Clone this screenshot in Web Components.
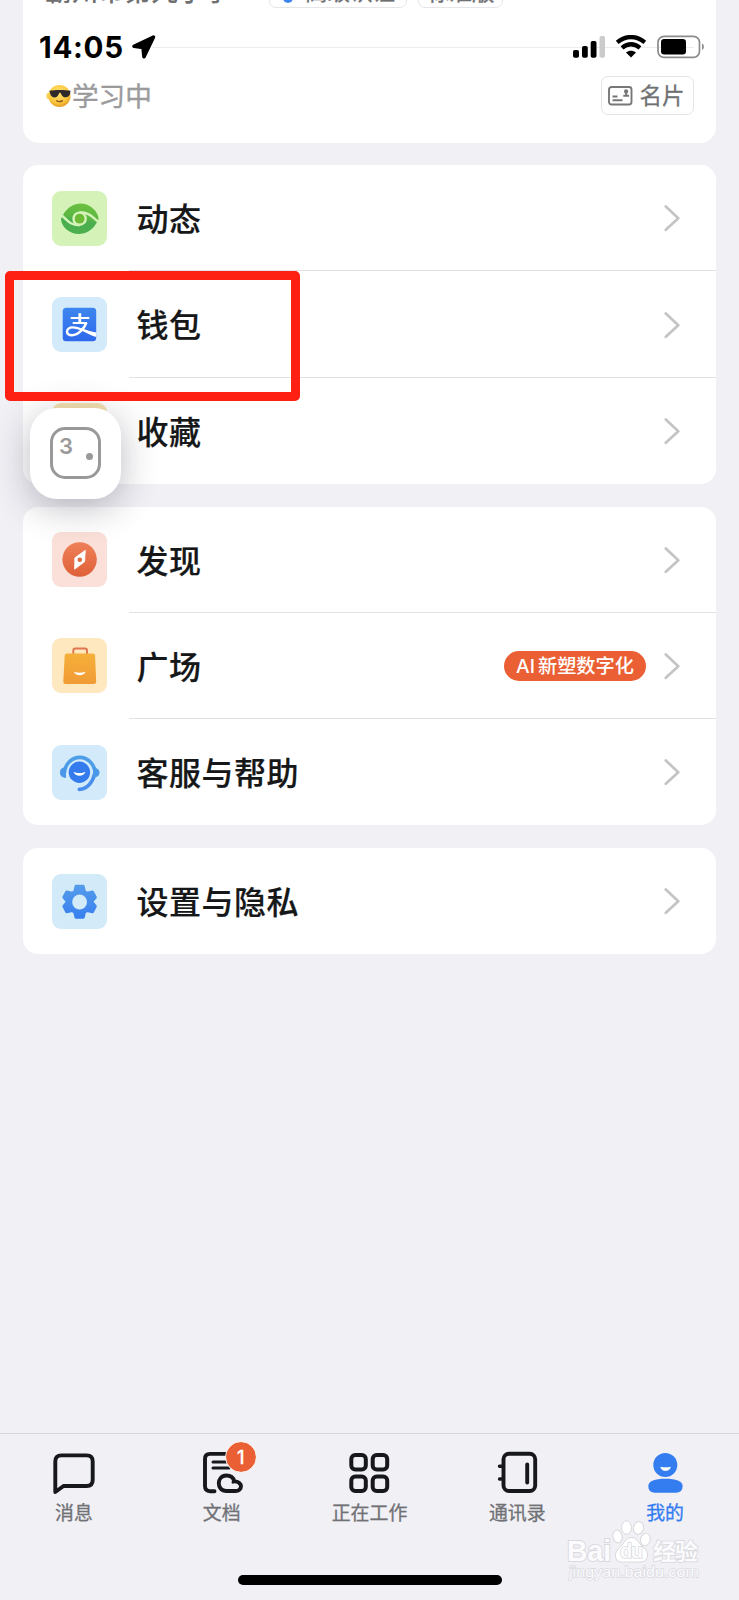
<!DOCTYPE html>
<html lang="zh-CN">
<head>
<meta charset="utf-8">
<title>我的</title>
<style>
    html, body { margin: 0; padding: 0; }
    body {
        width: 739px;
        height: 1600px;
        overflow: hidden;
        background: #f1f0f5;
        font-family: Inter, "Noto Sans CJK SC", sans-serif;
        color: #161718;
    }
</style>
</head>
<body>
<mine-page>
    <profile-card slot="profile">
        <span slot="org">霸州市第九小学</span>
        <span slot="level">高级认证</span>
        <span slot="version">标准版</span>
        <span slot="status">学习中</span>
        <span slot="namecard">名片</span>
    </profile-card>
    <menu-card>
        <menu-row icon="moments" tint="#d5f3b9">动态</menu-row>
        <menu-row icon="wallet" tint="#d3eafb">钱包</menu-row>
        <menu-row icon="none" tint="#f6e2b2">收藏</menu-row>
    </menu-card>
    <menu-card>
        <menu-row icon="discover" tint="#fae0d8">发现</menu-row>
        <menu-row icon="square" tint="#fde8bf">广场<tag-pill slot="extra">AI<span>新塑数字化</span></tag-pill></menu-row>
        <menu-row icon="service" tint="#d3eafb">客服与帮助</menu-row>
    </menu-card>
    <menu-card>
        <menu-row icon="settings" tint="#d3ebf8">设置与隐私</menu-row>
    </menu-card>
    <tab-bar slot="tabs">
        <tab-item icon="chat">消息</tab-item>
        <tab-item icon="docs" badge="1">文档</tab-item>
        <tab-item icon="work">正在工作</tab-item>
        <tab-item icon="contacts">通讯录</tab-item>
        <tab-item icon="me" active>我的</tab-item>
    </tab-bar>
    <status-bar slot="over">14:05</status-bar>
    <float-ball slot="over">3</float-ball>
    <red-frame slot="over"></red-frame>
    <water-mark slot="over"></water-mark>
</mine-page>

<script>
// every element here is just a template string + an open shadow root
function make(name, html, after) {
    const template = document.createElement('template');
    template.innerHTML = html;
    customElements.define(name, class extends HTMLElement {
        constructor() {
            super();
            this.attachShadow({ mode: 'open' }).appendChild(template.content.cloneNode(true));
        }
        connectedCallback() {
            if (after) after(this, this.shadowRoot);
        }
    });
}

// 55x55 tiles in the menu
const rowIcons = {
    none: '',
    moments: `
        <defs><linearGradient id="g" gradientUnits="userSpaceOnUse" x1="30" y1="12" x2="25" y2="43"><stop offset="0" stop-color="#6cc03e"/><stop offset=".45" stop-color="#5cb843"/><stop offset=".6" stop-color="#4aae50"/><stop offset="1" stop-color="#4cb04e"/></linearGradient></defs>
        <path d="M11.500 23C16 16 22 12.500 28.500 12.500C38 12.500 45.500 20 46.500 27C46.500 29 45.800 30.500 44.500 32C40 39.500 34 43 27 43C17 43 9.500 36 9 28Z" fill="url(#g)"/>
        <g fill="none" stroke="#d5f3b9" stroke-width="2.400">
            <path d="M7.500 22.500C14 27.500 17 34.200 27.500 34.200"/>
            <path d="M27.500 21.100C38 21.100 42 28 48 32"/>
        </g>
        <circle cx="27.600" cy="27.700" r="7.300" fill="#d5f3b9"/>
        <circle cx="27.600" cy="27.700" r="4.900" fill="#6cba36"/>`,
    wallet: `
        <defs><linearGradient id="g" x1="0" y1="0" x2="0" y2="1"><stop offset="0" stop-color="#3d86ee"/><stop offset="1" stop-color="#2f69ec"/></linearGradient></defs>
        <rect x="10.700" y="10.700" width="33.500" height="33.500" rx="3.500" fill="url(#g)"/>
        <g fill="none" stroke="#fff" stroke-width="2">
            <path d="M18.700 20.900H37.300M20.700 26H35"/>
            <path d="M27.800 16.200V26" stroke-width="2.800"/>
            <path d="M34.500 25.500C32.500 31 26.500 38.200 20 38.200C16.800 38.200 15 36.800 15 34.500C15 32.200 17.300 30.400 20.500 30.400C27.500 30.400 34 35 44.200 37.500" stroke-width="2.400"/>
        </g>
        <path d="M29 32.500C34 33.200 39 34.500 44.200 35.500V40C39 38.500 34 35.500 29 33Z" fill="#fff"/>`,
    discover: `
        <defs><linearGradient id="g" x1="0" y1="0" x2="0" y2="1"><stop offset="0" stop-color="#ee8058"/><stop offset="1" stop-color="#df6038"/></linearGradient></defs>
        <circle cx="27.600" cy="27.500" r="17.200" fill="url(#g)"/>
        <path d="M33.300 18.300L32.600 29.700L22.600 37.200L22.900 25.800Z" fill="#fff" stroke="#fff" stroke-width=".8" stroke-linejoin="round"/>
        <circle cx="27.800" cy="27.800" r="2.300" fill="#df6b42"/>`,
    square: `
        <defs><linearGradient id="g" x1="0" y1="0" x2="0" y2="1"><stop offset="0" stop-color="#f6b03a"/><stop offset="1" stop-color="#f19b36"/></linearGradient></defs>
        <path d="M21.300 17V12.500Q21.300 10.500 23.300 10.500H33Q35 10.500 35 12.500V17" fill="none" stroke="#e2744d" stroke-width="1.900"/>
        <path d="M15 15.500H41Q43 15.500 43.100 17.500L44.200 43.500Q44.300 46 42 46H13.500Q11.200 46 11.300 43.500L12.700 17.500Q12.800 15.500 15 15.500Z" fill="url(#g)"/>
        <path d="M21.800 33.600C24.500 35.200 31 35.200 33.700 33.600C32 38.600 23.500 38.600 21.800 33.600Z" fill="#fff"/>`,
    service: `
        <g fill="none" stroke="#4d9ee6" stroke-width="3.600">
            <path d="M12.500 27.500A15.300 16.500 0 0 1 43 27.500"/>
            <path d="M42.500 29C41 37 35.500 43.800 27.300 44.400" stroke="#4a8fee" stroke-linecap="round"/>
        </g>
        <path d="M14 22V33C9.500 32.500 8 30.500 8 27.500S9.500 22.500 14 22ZM41.400 22C46 23.500 47.500 25 47.500 27.500S46 32 41.400 33Z" fill="#4a98ea"/>
        <circle cx="27.400" cy="27.300" r="10.700" fill="#347bed"/>
        <path d="M21.500 26.800C24 28.500 31 28.500 33.500 26.800C32 32 23 32 21.500 26.800Z" fill="#fff"/>`,
    settings: `
        <defs><linearGradient id="g" gradientUnits="userSpaceOnUse" x1="0" y1="10" x2="0" y2="45"><stop offset="0" stop-color="#569eeb"/><stop offset="1" stop-color="#377eef"/></linearGradient></defs>
        <path fill="url(#g)" stroke="url(#g)" stroke-width="3" stroke-linejoin="round" d="M24 12.300H31.200L32.500 17.800L35 19.100L40.500 17.900L43.300 23.300L39.600 27.800L43.300 32.300L40.500 37.700L35 36.600L32.500 38L31.200 43.300H24L22.700 38L20.200 36.600L14.700 37.700L11.900 32.300L15.600 27.800L11.900 23.300L14.700 17.900L20.200 19.100L22.700 17.800Z"/>
        <circle cx="27.600" cy="28" r="7.400" fill="#d3ebf8"/>`
};

// 48x48 tab icons
const tabIcons = {
    chat: `<path d="M5.300 42V11.400Q5.300 5.400 11.300 5.400H36.700Q42.700 5.400 42.700 11.400V30Q42.700 36 36.700 36H13.500Z" fill="none" stroke="#17181c" stroke-width="3.900" stroke-linejoin="round"/>`,
    docs: `
        <g fill="none" stroke="#17181c" stroke-width="3.900" stroke-linecap="round">
            <path d="M36 3.900H12Q7 3.900 7 8.900V36.100Q7 41.200 12 41.200H16.500"/>
            <path d="M15 12H30M15 17.900H31" stroke-width="3"/>
            <path d="M28.500 41C18 41 18.500 25.600 28.300 25.500C33 25.500 35.500 28.300 36.200 31.200C45.500 31.800 44.500 41 37.500 41Z" stroke-linejoin="round"/>
            <path d="M36 31.500L34.800 32.300" stroke-width="2.600"/>
        </g>`,
    work: `
        <g fill="none" stroke="#17181c" stroke-width="4">
            <rect x="6.300" y="5" width="14.500" height="14.500" rx="4"/>
            <rect x="27.700" y="5" width="14.500" height="14.500" rx="4"/>
            <rect x="6.300" y="26.400" width="14.500" height="14.500" rx="4"/>
            <rect x="27.700" y="26.400" width="14.500" height="14.500" rx="4"/>
        </g>`,
    contacts: `
        <g fill="none" stroke="#17181c" stroke-width="3.900" stroke-linecap="round">
            <rect x="10.500" y="3.800" width="31.700" height="37.200" rx="5.500"/>
            <path d="M34.200 14.500V32.500"/>
            <path d="M6.500 16.300H10M6.500 29H10" stroke-width="3.400"/>
        </g>`,
    me: `
        <circle cx="24.300" cy="15" r="12" fill="#347df0"/>
        <path d="M7.300 36C7.300 31.300 14 28.800 24.400 28.800S41.600 31.300 41.600 36Q41.600 42.800 34.800 42.800H14Q7.300 42.800 7.300 36Z" fill="#347df0"/>
        <path d="M19.800 17.200C22.300 17.900 26.800 17.900 29.300 17.200C28.800 21.600 20.300 21.600 19.800 17.200Z" fill="#fff" stroke="#fff" stroke-width=".8" stroke-linejoin="round"/>`
};

make('mine-page', `
    <style>
        :host {
            display: flex;
            flex-direction: column;
            position: relative;
            width: 739px;
            height: 1600px;
            overflow: hidden;
        }
        main {
            display: flex;
            flex-direction: column;
            gap: 22.8px;
            padding: 0 23px;
            flex: 1;
        }
    </style>
    <main>
        <slot name="profile"></slot>
        <slot></slot>
    </main>
    <slot name="tabs"></slot>
    <slot name="over"></slot>
`);

make('profile-card', `
    <style>
        :host {
            display: flex;
            flex-direction: column;
            box-sizing: border-box;
            height: 142.500px;
            background: #fff;
            border-radius: 0 0 16px 16px;
            overflow: hidden;
        }
        .org {
            display: flex;
            align-items: flex-end;
            height: 47px;
            margin-top: -39px;
            padding-left: 22px;
            color: #6f7072;
            font-size: 26.600px;
            line-height: 34px;
            white-space: nowrap;
        }
        .org slot[name="org"] { display: block; width: 224px; flex: none; font-weight: 500; }
        .tag {
            display: flex;
            align-items: center;
            box-sizing: border-box;
            flex: none;
            height: 36px;
            border: 1px solid #e6e6e8;
            border-radius: 7px;
            padding: 4px 9px 0;
            margin-right: 11px;
            font-size: 22.500px;
            -webkit-text-stroke: .3px;
        }
        .tag i { width: 10px; height: 10px; border-radius: 50%; background: #3d86f2; margin: 11px 12px 0 4px; }
        .tag.a { width: 138px; }
        .tag.b { width: 85px; padding-left: 8px; }
        .line { flex: none; height: 1px; margin: 39px 22px 0 129px; background: #ececee; }
        .state {
            display: flex;
            align-items: center;
            justify-content: space-between;
            padding: 28px 22.500px 0 23px;
        }
        .mood { display: flex; align-items: center; font-size: 26.600px; color: #9b9b9d; line-height: 38px; padding-top: 1px; -webkit-text-stroke: .4px; }
        .card {
            display: flex;
            align-items: center;
            box-sizing: border-box;
            width: 93px;
            height: 38.500px;
            padding-left: 6px;
            gap: 7px;
            border: 1px solid #e4e4e6;
            border-radius: 7px;
            font-size: 22.500px;
            color: #707173;
            line-height: 36px;
            -webkit-text-stroke: .3px;
        }
    </style>
    <div class="org">
        <slot name="org"></slot>
        <div class="tag a"><i></i><slot name="level"></slot></div>
        <div class="tag b"><slot name="version"></slot></div>
    </div>
    <div class="line"></div>
    <div class="state">
        <div class="mood">
            <svg width="26" height="26" viewBox="0 0 27 26">
                <defs><radialGradient id="f" cx=".45" cy=".35" r=".65"><stop offset="0" stop-color="#ffe071"/><stop offset=".7" stop-color="#fbc83d"/><stop offset="1" stop-color="#e39b25"/></radialGradient></defs>
                <circle cx="3.500" cy="13" r="3.300" fill="#fbd461"/>
                <circle cx="14" cy="13" r="11.500" fill="url(#f)"/>
                <path d="M3.500 7.500C9 6.500 20 6.500 25.500 7.500L25 10.500C24.500 15 18 16 16 11.500L15 9.500H14L13 11.500C11.500 16 5.500 15.500 4.500 11Z" fill="#2e2a2a"/>
                <path d="M11 18Q14 20 17 17.800" fill="none" stroke="#884e1c" stroke-width="1.300" stroke-linecap="round"/>
            </svg>
            <slot name="status"></slot>
        </div>
        <div class="card">
            <svg width="25" height="20" viewBox="0 0 25 20" fill="none" stroke="#777779" stroke-width="1.900">
                <rect x="1" y="1" width="22.500" height="17.500" rx="2.500"/>
                <path d="M4.500 10.500H9.500M4.500 14.200H14.500"/>
                <path d="M18.100 5V9M15.300 9.700H21" stroke-width="1.900"/>
                <circle cx="18.100" cy="5.500" r="1.200"/>
            </svg>
            <slot name="namecard"></slot>
        </div>
    </div>
`);

make('menu-card', `
    <style>
        :host {
            display: flex;
            flex-direction: column;
            background: #fff;
            border-radius: 15px;
        }
        ::slotted(menu-row:not(:last-child)) { --line: #e2e2e5; }
    </style>
    <slot></slot>
`);

make('menu-row', `
    <style>
        :host {
            display: grid;
            grid-template-columns: 55px 1fr auto 17px;
            align-items: center;
            box-sizing: border-box;
            height: 106.200px;
            padding: 0 36px 0 29px;
            background: linear-gradient(var(--line, transparent), var(--line, transparent)) 106px 100% / 100% 1px no-repeat;
        }
        .tile { width: 55px; height: 55px; border-radius: 9px; }
        .tile svg { display: block; }
        .name {
            padding: 0 0 2.500px 29.500px;
            font-family: "Noto Sans CJK SC", sans-serif;
            font-size: 32px;
            font-weight: 500;
            letter-spacing: .5px;
            line-height: 46px;
            -webkit-text-stroke: .2px;
        }
        .chev { grid-column: 4; }
    </style>
    <div class="tile"><svg width="55" height="55" viewBox="0 0 55 55"></svg></div>
    <div class="name"><slot></slot></div>
    <slot name="extra"></slot>
    <svg class="chev" width="17" height="28" viewBox="0 0 17 28"><path d="M2.800 2.500L15.300 14.200L2.800 25.800" fill="none" stroke="#c4c4c6" stroke-width="2.700" stroke-linecap="round" stroke-linejoin="round"/></svg>
`, (el, root) => {
    root.querySelector('.tile').style.background = el.getAttribute('tint');
    root.querySelector('.tile svg').innerHTML = rowIcons[el.getAttribute('icon')];
});

make('tag-pill', `
    <style>
        :host {
            display: flex;
            align-items: center;
            justify-content: center;
            gap: 3px;
            box-sizing: border-box;
            width: 142px;
            height: 30px;
            padding-top: 1px;
            margin-right: 17px;
            border-radius: 15px;
            background: #ea5f33;
            color: #fff;
            font: 500 19.200px/30px Inter, "Noto Sans CJK SC", sans-serif;
        }
    </style>
    <slot></slot>
`);

make('tab-bar', `
    <style>
        :host {
            display: flex;
            flex-direction: column;
            box-sizing: border-box;
            height: 167px;
            padding-top: 15px;
            border-top: 1px solid #d6d6da;
            background: #f1f0f5;
        }
        .tabs { display: grid; grid-template-columns: repeat(5, 1fr); height: 126px; }
        .home { width: 264px; height: 10px; border-radius: 5px; background: #000; margin: 0 auto; }
    </style>
    <div class="tabs"><slot></slot></div>
    <div class="home"></div>
`);

make('tab-item', `
    <style>
        :host {
            display: flex;
            flex-direction: column;
            align-items: center;
            position: relative;
            color: #707175;
            font: 400 18.900px/28px "Noto Sans CJK SC", sans-serif;
            -webkit-text-stroke: .3px;
        }
        :host([active]) { color: #347df0; }
        svg { display: block; margin: 1px 0 0; }
        .badge {
            position: absolute;
            left: 78px;
            top: -7px;
            width: 30px;
            height: 30px;
            border-radius: 50%;
            background: #ea5f33;
            outline: 1px solid #fbeee9;
            color: #fff;
            text-align: center;
            font: 500 18px/31px Inter, sans-serif;
        }
    </style>
    <svg width="48" height="48" viewBox="0 0 48 48"></svg>
    <slot></slot>
`, (el, root) => {
    root.querySelector('svg').innerHTML = tabIcons[el.getAttribute('icon')];
    const badge = el.getAttribute('badge');
    if (badge) {
        const b = document.createElement('div');
        b.className = 'badge';
        b.textContent = badge;
        root.appendChild(b);
    }
});

make('status-bar', `
    <style>
        :host {
            position: absolute;
            top: 29px;
            left: 0;
            right: 0;
            display: flex;
            align-items: center;
            box-sizing: border-box;
            height: 36px;
            padding: 0 35px 0 39px;
            color: #000;
            font: 700 29.500px/36px Inter, sans-serif;
        }
        .time { width: 92px; white-space: nowrap; letter-spacing: .7px; }
        .right { display: flex; align-items: center; margin-left: auto; }
    </style>
    <div class="time"><slot></slot></div>
    <svg width="26" height="26" viewBox="0 0 26 26"><path d="M22.500 3L3 12.300L12 13.500L13 22.700Z" stroke="#000" stroke-width="3.600" stroke-linejoin="round"/></svg>
    <div class="right">
        <svg width="131" height="24" viewBox="0 0 131 24">
            <rect x="0" y="15" width="6" height="7.700" rx="1.800"/>
            <rect x="9" y="11" width="5.800" height="11.700" rx="1.800"/>
            <rect x="17.700" y="6" width="5.800" height="16.700" rx="1.800"/>
            <rect x="26.500" y="1" width="5.500" height="21.700" rx="1.800" fill="#cbcbcb"/>
            <g fill="none" stroke="#000" stroke-width="4.300">
                <path d="M44.200 7.300C52.500 .3 63.500 .3 71.800 7.300"/>
                <path d="M49 12.900C54.700 8.300 61.300 8.300 67 12.900"/>
            </g>
            <path d="M58 22.500L53 17.600C56 15 60 15 63 17.600Z"/>
            <rect x="85" y="1.300" width="41.500" height="21" rx="6" fill="none" stroke="#8c8c8c" stroke-width="1.700"/>
            <rect x="88" y="4" width="25" height="15.500" rx="3.200"/>
            <path d="M129 8.500V15C131.500 13.800 131.500 9.700 129 8.500Z" fill="#8c8c8c"/>
        </svg>
    </div>
`);

make('float-ball', `
    <style>
        :host {
            position: absolute;
            left: 30px;
            top: 408px;
            display: flex;
            box-sizing: border-box;
            width: 91px;
            height: 91px;
            padding: 19px 0 0 20px;
            border-radius: 27px;
            background: #fff;
            box-shadow: 0 8px 36px rgba(30, 30, 50, .3);
        }
        .box {
            position: relative;
            box-sizing: border-box;
            width: 51px;
            height: 52px;
            border: 3.500px solid #999;
            border-radius: 15px;
            padding: 5px 0 0 6px;
            color: #999;
            font: 600 22px/22px Inter, sans-serif;
        }
        .box::after {
            content: "";
            position: absolute;
            right: 5px;
            top: 22.500px;
            width: 7px;
            height: 7px;
            border-radius: 50%;
            background: #999;
        }
    </style>
    <div class="box"><slot></slot></div>
`);

make('red-frame', `
    <style>
        :host {
            position: absolute;
            left: 5px;
            top: 271px;
            box-sizing: border-box;
            width: 295px;
            height: 130px;
            border: 9px solid #ff2014;
            border-radius: 5px;
        }
    </style>
`);

make('water-mark', `
    <style>
        :host { position: absolute; left: 562px; top: 1518px; }
        svg { display: block; }
        text { fill: #fbfbfd; stroke: #d9d9de; paint-order: stroke; font-family: "Liberation Sans", "Noto Sans CJK SC", sans-serif; }
    </style>
    <svg width="145" height="66" viewBox="0 0 145 66">
        <text x="5" y="43" font-size="30" font-weight="700" stroke-width="2" textLength="44" lengthAdjust="spacingAndGlyphs">Bai</text>
        <g fill="#fff" stroke="#d8d8dd" stroke-width="1">
            <ellipse cx="55.500" cy="18.500" rx="4.700" ry="6.500" transform="rotate(-12 55.500 18.500)"/>
            <ellipse cx="64.500" cy="9.500" rx="5" ry="6.700"/>
            <ellipse cx="76.500" cy="10" rx="5" ry="6.500" transform="rotate(12 76.500 10)"/>
            <ellipse cx="83.500" cy="21.500" rx="4.800" ry="6.300" transform="rotate(14 83.500 21.500)"/>
            <path d="M69.500 19.500C74 19.500 76 23.500 79 27C83 31 86 33 85.500 38C85 43 81 44.500 76 44H63C57.500 44.800 53.500 42.500 53.500 38C53.500 33 56 31 60 27C63 23.500 65 19.500 69.500 19.500Z"/>
        </g>
        <text x="58" y="40" font-size="20" font-weight="700" stroke-width="1.500" textLength="23">du</text>
        <text x="91" y="42" font-size="23" font-weight="700" stroke-width="1.600" textLength="45">经验</text>
        <text x="7" y="59" font-size="14.500" stroke-width="1.300" textLength="130" lengthAdjust="spacingAndGlyphs">jingyan.baidu.com</text>
    </svg>
`);
</script>
</body>
</html>
